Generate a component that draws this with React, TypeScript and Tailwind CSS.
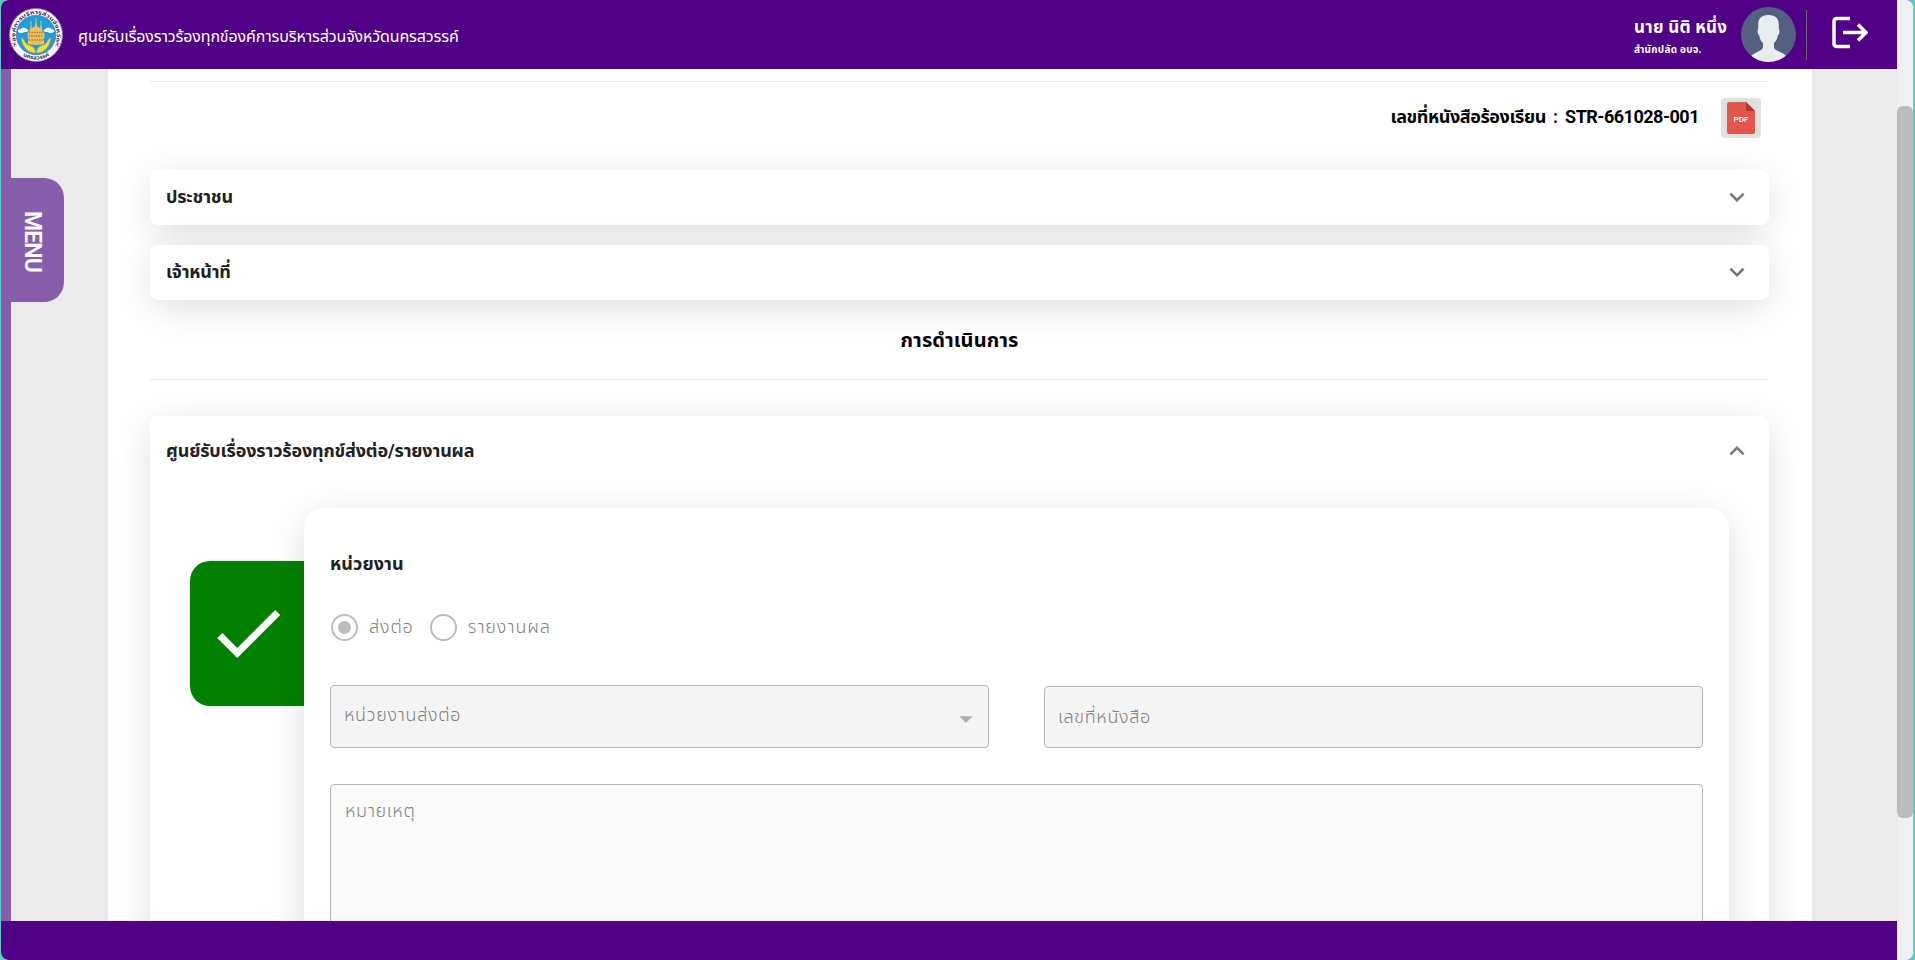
import React from 'react';
import { MdCheck, MdExpandMore, MdExpandLess, MdArrowDropDown } from 'react-icons/md';

const cardShadow = 'shadow-[0_8px_40px_-4px_rgba(0,0,0,0.16)]';

function Seal() {
  return (
    <svg viewBox="0 0 54 54" className="h-[54px] w-[54px] shrink-0">
      <defs>
        <path id="seal-top" d="M7.100 33A20.800 20.800 0 1 1 46.900 33" />
        <path id="seal-bottom" d="M10.600 45.200A24.500 24.500 0 0 0 43.400 45.200" />
      </defs>
      <circle cx="27" cy="27" r="26.500" fill="#fff" stroke="#8d8298" strokeWidth="0.900" />
      <circle cx="27" cy="27" r="19.800" fill="#1c9ce0" stroke="#6b6b8e" strokeWidth="0.700" />
      <path d="M9 24q-1-2.500 2.500-3 2-2.500 5-1l3 2.500q-1 2-4 1.500-3 1.800-6.500 0M45 24q1-2.500-2.500-3-2-2.500-5-1l-3 2.500q1 2 4 1.500 3 1.800 6.500 0" fill="#fff" />
      <path d="M27 10v10M22 13v8M32 13v8" stroke="#e7c136" strokeWidth="1" />
      <path d="M20 24l1.500-4 .5-3 .8 3 3-1.500 1.200-4.500 1.200 4.500 3 1.500.8-3 .5 3 1.500 4 1.500 1v4l-1 2 1 5q-8.500 2-17 0l1-5-1-2v-4z" fill="#efc05a" />
      <path d="M20 24.500h14M19.500 28h15M20 32h14" stroke="#c4772e" strokeWidth="1.300" strokeDasharray="1.500 1" />
      <path d="M12 30q2-.5 2.500 1.500l3 4.500 5 2q3.500 1.500 4 6v1q-6 0-9.500-4-4-4-5-11M42 30q-2-.5-2.500 1.500l-3 4.500-5 2q-3.500 1.500-4 6v1q6 0 9.500-4 4-4 5-11" fill="#f3df35" stroke="#a88a25" strokeWidth="0.400" />
      <path d="M3.500 35.500l4 1.500M6 34l-1 5M46.500 37l4-1.500M48 34l1 5" stroke="#d0485a" strokeWidth="1" />
      <text fontSize="5.400" fontWeight="700" fill="#3a2b6b">
        <textPath href="#seal-top" startOffset="0" textLength="78" lengthAdjust="spacingAndGlyphs">องค์การบริหารส่วนจังหวัด</textPath>
      </text>
      <text fontSize="5.400" fontWeight="700" fill="#3a2b6b">
        <textPath href="#seal-bottom" startOffset="4" textLength="28" lengthAdjust="spacingAndGlyphs">นครสวรรค์</textPath>
      </text>
    </svg>
  );
}

function Avatar() {
  return (
    <svg viewBox="0 0 55 55" className="h-[55px] w-[55px]">
      <defs>
        <clipPath id="avatar-clip"><circle cx="27.500" cy="27.500" r="27.500" /></clipPath>
      </defs>
      <g clipPath="url(#avatar-clip)">
        <rect width="55" height="55" fill="#556080" />
        <path d="M27.500 8C20 8 17 12 17.200 18v4c-1.200.6-.8 5 1 6.500.8 4 2 6 3.800 7.500v4.500c-1 3.500-8 4.500-12 8.500V56h35v-7c-4-4-11-5-12-8.500V36c1.800-1.500 3-3.500 3.800-7.500 1.800-1.500 2.200-5.900 1-6.500v-4C38 12 35 8 27.500 8z" fill="#e7eced" />
      </g>
    </svg>
  );
}

function Panel({ title }: { title: string }) {
  return (
    <section className={`flex h-[55px] items-center justify-between rounded-lg bg-white pb-0.5 pl-4 pr-[17px] ${cardShadow}`}>
      <h3 className="text-[18px] font-bold tracking-[-0.2px] text-[#212121]">{title}</h3>
      <MdExpandMore className="size-[30px] text-[#757575]" />
    </section>
  );
}

function Radio({ label, checked }: { label: string; checked?: boolean }) {
  return (
    <label className="flex items-center">
      <span className="flex size-[27px] items-center justify-center rounded-full border-2 border-[#bdbdbd]">
        {checked && <span className="size-[13px] rounded-full bg-[#bdbdbd]" />}
      </span>
      <span className="ml-[11px] pb-0.5 text-[18px] font-light tracking-[0.85px] text-[#808080]">{label}</span>
    </label>
  );
}

export default function App() {
  return (
    <div className="h-[960px] w-[1915px] overflow-hidden bg-[#5accc8] pl-px pr-0.5 font-[Roboto,'Noto_Sans_Thai',sans-serif]">
      <div className="flex h-full overflow-hidden rounded-lg bg-[#f0f0f0]">
        <div className="flex w-[1896px] flex-col">
          <header className="relative z-10 flex h-[69px] shrink-0 items-center bg-[#500087] pl-2 text-white">
            <Seal />
            <h1 className="ml-[15px] pt-1 text-[16px] tracking-[-0.13px]">ศูนย์รับเรื่องราวร้องทุกข์องค์การบริหารส่วนจังหวัดนครสวรรค์</h1>
            <div className="ml-auto w-[107px] whitespace-nowrap pt-[3px]">
              <p className="text-[17px] font-bold leading-7 tracking-[0.25px]">นาย นิติ หนึ่ง</p>
              <p className="text-[10px] font-bold leading-[18px] tracking-[0.25px]">สำนักปลัด อบจ.</p>
            </div>
            <Avatar />
            <div className="ml-2.5 h-[50px] w-px bg-[#6d6d6d]" />
            <svg viewBox="0 0 36 34" className="mb-1 ml-[25px] mr-[29px] h-[34px] w-9" fill="none" stroke="#fff" strokeWidth="3.500">
              <path d="M18 2.500H5Q2 2.500 2 5.500v22q0 3 3 3h13M11 16.500h23M26 8.500l8 8-8 8" />
            </svg>
          </header>

          <div className="flex min-h-0 flex-1 overflow-hidden bg-[#eaeaea]">
            <div className="w-2.5 shrink-0 bg-[#875eaa]" />
            <div className="w-[97px] shrink-0 pt-[109px]">
              <button className="flex h-[124px] w-[53px] items-center justify-center rounded-r-[20px] bg-[#875eaa] pr-2.5 pt-0.5 text-white">
                <span className="text-[23px] font-semibold leading-none tracking-[-0.9px] [writing-mode:vertical-rl]">MENU</span>
              </button>
            </div>
            <main className="w-[1704px] shrink-0 overflow-hidden bg-white pl-[42px] pr-[43px] pt-3">
              <div className="h-px bg-[#e8e8e8]" />
              <div className="mt-4 flex h-10 items-center justify-end pr-2">
                <p className="flex gap-[7px] pb-[3px] text-[18px] font-bold text-black">
                  <span className="tracking-[-0.42px]">เลขที่หนังสือร้องเรียน</span>
                  <span>:</span>
                  <span className="tracking-[-0.5px]">STR-661028-001</span>
                </p>
                <div className="ml-[22px] flex size-10 items-center justify-center rounded bg-[#e0e0e0]">
                  <svg viewBox="0 0 28 32" className="h-8 w-7">
                    <path d="M2 0h17l9 9v21q0 2-2 2H2q-2 0-2-2V2Q0 0 2 0z" fill="#e2574c" />
                    <path d="M19 0l9 9h-8q-1 0-1-1z" fill="#b53629" />
                    <text x="6.500" y="19.700" fontSize="8" fontWeight="500" fill="#fff" textLength="15">PDF</text>
                  </svg>
                </div>
              </div>

              <div className="mt-8 flex flex-col gap-5">
                <Panel title="ประชาชน" />
                <Panel title="เจ้าหน้าที่" />
              </div>

              <h2 className="mt-5 flex h-[59px] justify-center pt-[5px] text-[20px] font-bold tracking-[0.1px] text-black">การดำเนินการ</h2>
              <div className="h-px bg-[#e8e8e8]" />

              <section className={`mt-9 h-[700px] rounded-lg bg-white ${cardShadow}`}>
                <div className="flex h-[70px] items-center justify-between pl-4 pr-[17px]">
                  <h3 className="pb-0.5 text-[18px] font-bold tracking-[-0.16px] text-[#212121]">ศูนย์รับเรื่องราวร้องทุกข์ส่งต่อ/รายงานผล</h3>
                  <MdExpandLess className="size-[30px] text-[#757575]" />
                </div>
                <div className="flex items-start pl-10 pr-10 pt-[22px]">
                  <div className="mt-[53px] flex h-[145px] w-[114px] items-center justify-center rounded-l-[20px] bg-[#008000]">
                    <MdCheck className="mb-0.5 ml-0.5 size-[86px] text-white" />
                  </div>
                  <div className={`relative h-[600px] flex-1 rounded-[20px] bg-white px-[26px] pt-10 ${cardShadow}`}>
                    <h4 className="h-8 text-[18px] font-bold leading-8 tracking-[0.1px] text-[#212121]">หน่วยงาน</h4>
                    <div className="mt-[34px] flex h-[27px] items-center gap-4 pl-px">
                      <Radio label="ส่งต่อ" checked />
                      <Radio label="รายงานผล" />
                    </div>
                    <div className="mt-11 flex items-end gap-[55px] text-[18px] font-light tracking-[0.65px] text-[#808080]">
                      <div className="flex h-[63px] w-[659px] items-center justify-between rounded border border-[#b5b5b5] bg-[#f4f4f4] pb-1 pl-[13px] pr-1.5">
                        <span>หน่วยงานส่งต่อ</span>
                        <MdArrowDropDown className="mt-2 size-8 text-[#b0b0b0]" />
                      </div>
                      <div className="flex h-[62px] w-[659px] items-center rounded border border-[#b5b5b5] bg-[#f4f4f4] pb-0.5 pl-[13px]">
                        <span>เลขที่หนังสือ</span>
                      </div>
                    </div>
                    <div className="mt-9 h-[200px] rounded border border-[#b9b9b9] bg-[#fafafa] pl-[14px] pt-3 text-[18px] font-light tracking-[0.6px] text-[#808080]">
                      หมายเหตุ
                    </div>
                  </div>
                </div>
              </section>
            </main>
          </div>
          <footer className="relative z-10 h-[39px] shrink-0 bg-[#500087]" />
        </div>
        <div className="w-4 shrink-0 bg-[#f0f0f0] pt-[106px]">
          <div className="h-[712px] w-4 rounded-[6px] bg-[#bcbcbc]" />
        </div>
      </div>
    </div>
  );
}
